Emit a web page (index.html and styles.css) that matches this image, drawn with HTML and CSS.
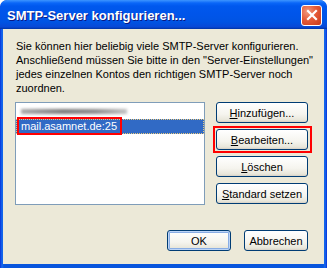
FILE: index.html
```html
<!DOCTYPE html>
<html>
<head>
<meta charset="utf-8">
<link rel="stylesheet" href="styles.css">
</head>
<body>
<div class="window">
  <div class="titlebar">
    <span class="title">SMTP-Server konfigurieren...</span>
    <span class="close"><svg width="12" height="12" viewBox="0 0 12 12"><path d="M2 2 L10 10 M10 2 L2 10" stroke="#fff" stroke-width="2.2" stroke-linecap="square"/></svg></span>
  </div>
  <div class="client">
    <p class="desc">Sie können hier beliebig viele SMTP-Server konfigurieren. Anschließend müssen Sie bitte in den "Server-Einstellungen" jedes einzelnen Kontos den richtigen SMTP-Server noch zuordnen.</p>
    <div class="main">
      <div class="list">
        <div class="item blurred"><span class="smear"></span></div>
        <div class="item selected"><span class="mark">mail.asamnet.de:25</span></div>
      </div>
      <div class="side">
        <button class="btn"><u>H</u>inzufügen...</button>
        <button class="btn marked"><u>B</u>earbeiten...</button>
        <button class="btn"><u>L</u>öschen</button>
        <button class="btn"><u>S</u>tandard setzen</button>
      </div>
    </div>
    <div class="footer">
      <button class="btn default">OK</button>
      <button class="btn">Abbrechen</button>
    </div>
  </div>
</div>
</body>
</html>
```

FILE: styles.css
```css
html, body {
  margin: 0;
  padding: 0;
  background: #fff;
}
.window {
  width: 327px;
  height: 268px;
  box-sizing: border-box;
  background: linear-gradient(to right, #0831D9 0px, #166AEE 2px, #0855DD 4px, #0855DD 323px, #166AEE 325px, #0831D9 327px);
  border-radius: 7px 7px 0 0;
  display: flex;
  flex-direction: column;
  padding: 0 3px 4px 3px;
  font-family: "Liberation Sans", Arial, sans-serif;
  font-size: 11px;
  color: #000;
  overflow: hidden;
}
.titlebar {
  height: 29px;
  margin: 0 -3px;
  padding: 0 5px 0 7px;
  border-radius: 7px 7px 0 0;
  background: linear-gradient(to bottom, #3D95FF 0px, #0A66F8 3px, #0058EE 6px, #0055EA 14px, #0054E3 22px, #0848D6 27px, #0033A3 29px);
  display: flex;
  align-items: center;
  justify-content: space-between;
}
.title {
  color: #fff;
  font-family: "Liberation Sans", Arial, sans-serif;
  font-weight: bold;
  font-size: 13px;
  text-shadow: 1px 1px 0 #0A1883;
  padding-top: 1px;
}
.close {
  width: 19px;
  height: 19px;
  border: 1px solid #fff;
  border-radius: 3px;
  background: radial-gradient(circle at 30% 30%, #F09A80 0%, #E55B38 45%, #C8391A 100%);
  display: flex;
  align-items: center;
  justify-content: center;
  margin-top: 1px;
}
.client {
  flex: 1;
  background: #ECE9D8;
  display: flex;
  flex-direction: column;
  padding: 10px 16px 0 12px;
}
.desc {
  margin: 0 0 0 1px;
  line-height: 14px;
  width: 300px;
}
.main {
  display: flex;
  gap: 11px;
  margin-top: 7px;
}
.list {
  width: 190px;
  height: 103px;
  box-sizing: border-box;
  border: 1px solid #7F9DB9;
  background: #fff;
  padding-top: 1px;
}
.item {
  height: 15px;
  line-height: 15px;
  padding-left: 4px;
  position: relative;
}
.blurred {
  display: flex;
  align-items: center;
}
.smear {
  display: block;
  width: 106px;
  height: 5px;
  margin-left: 1px;
  background: linear-gradient(to right, #a8a8a8, #7a7a7a 40%, #8a8a8a 70%, #c0c0c0);
  filter: blur(1.5px);
}
.selected {
  background: #316AC5;
  color: #fff;
  outline: 1px dotted #E8C97C;
  outline-offset: -1px;
}
.mark {
  position: relative;
  padding-left: 1px;
}
.mark::after {
  content: "";
  position: absolute;
  left: -3px;
  right: -5px;
  top: -3px;
  bottom: -3px;
  border: 2px solid #FF0000;
}
.side {
  display: flex;
  flex-direction: column;
  gap: 6px;
}
.btn {
  font-family: "Liberation Sans", Arial, sans-serif;
  font-size: 11px;
  color: #000;
  height: 21px;
  padding: 0;
  border: 1px solid #003C74;
  border-radius: 3px;
  background: linear-gradient(to bottom, #FFFFFF 0%, #F5F4EE 60%, #E8E6DA 90%, #D6D0C5 100%);
  box-sizing: border-box;
  position: relative;
}
.side .btn {
  width: 92px;
}
.marked::after {
  content: "";
  position: absolute;
  left: -4px;
  right: -5px;
  top: -4px;
  bottom: -4px;
  border: 2px solid #FF0000;
}
.footer {
  margin-top: auto;
  margin-bottom: 13px;
  display: flex;
  justify-content: flex-end;
  gap: 13px;
}
.footer .btn {
  width: 64px;
}
.default {
  box-shadow: inset 0 0 0 1px #BCD4F6, inset 0 0 0 2px #89ADE4;
}
```
